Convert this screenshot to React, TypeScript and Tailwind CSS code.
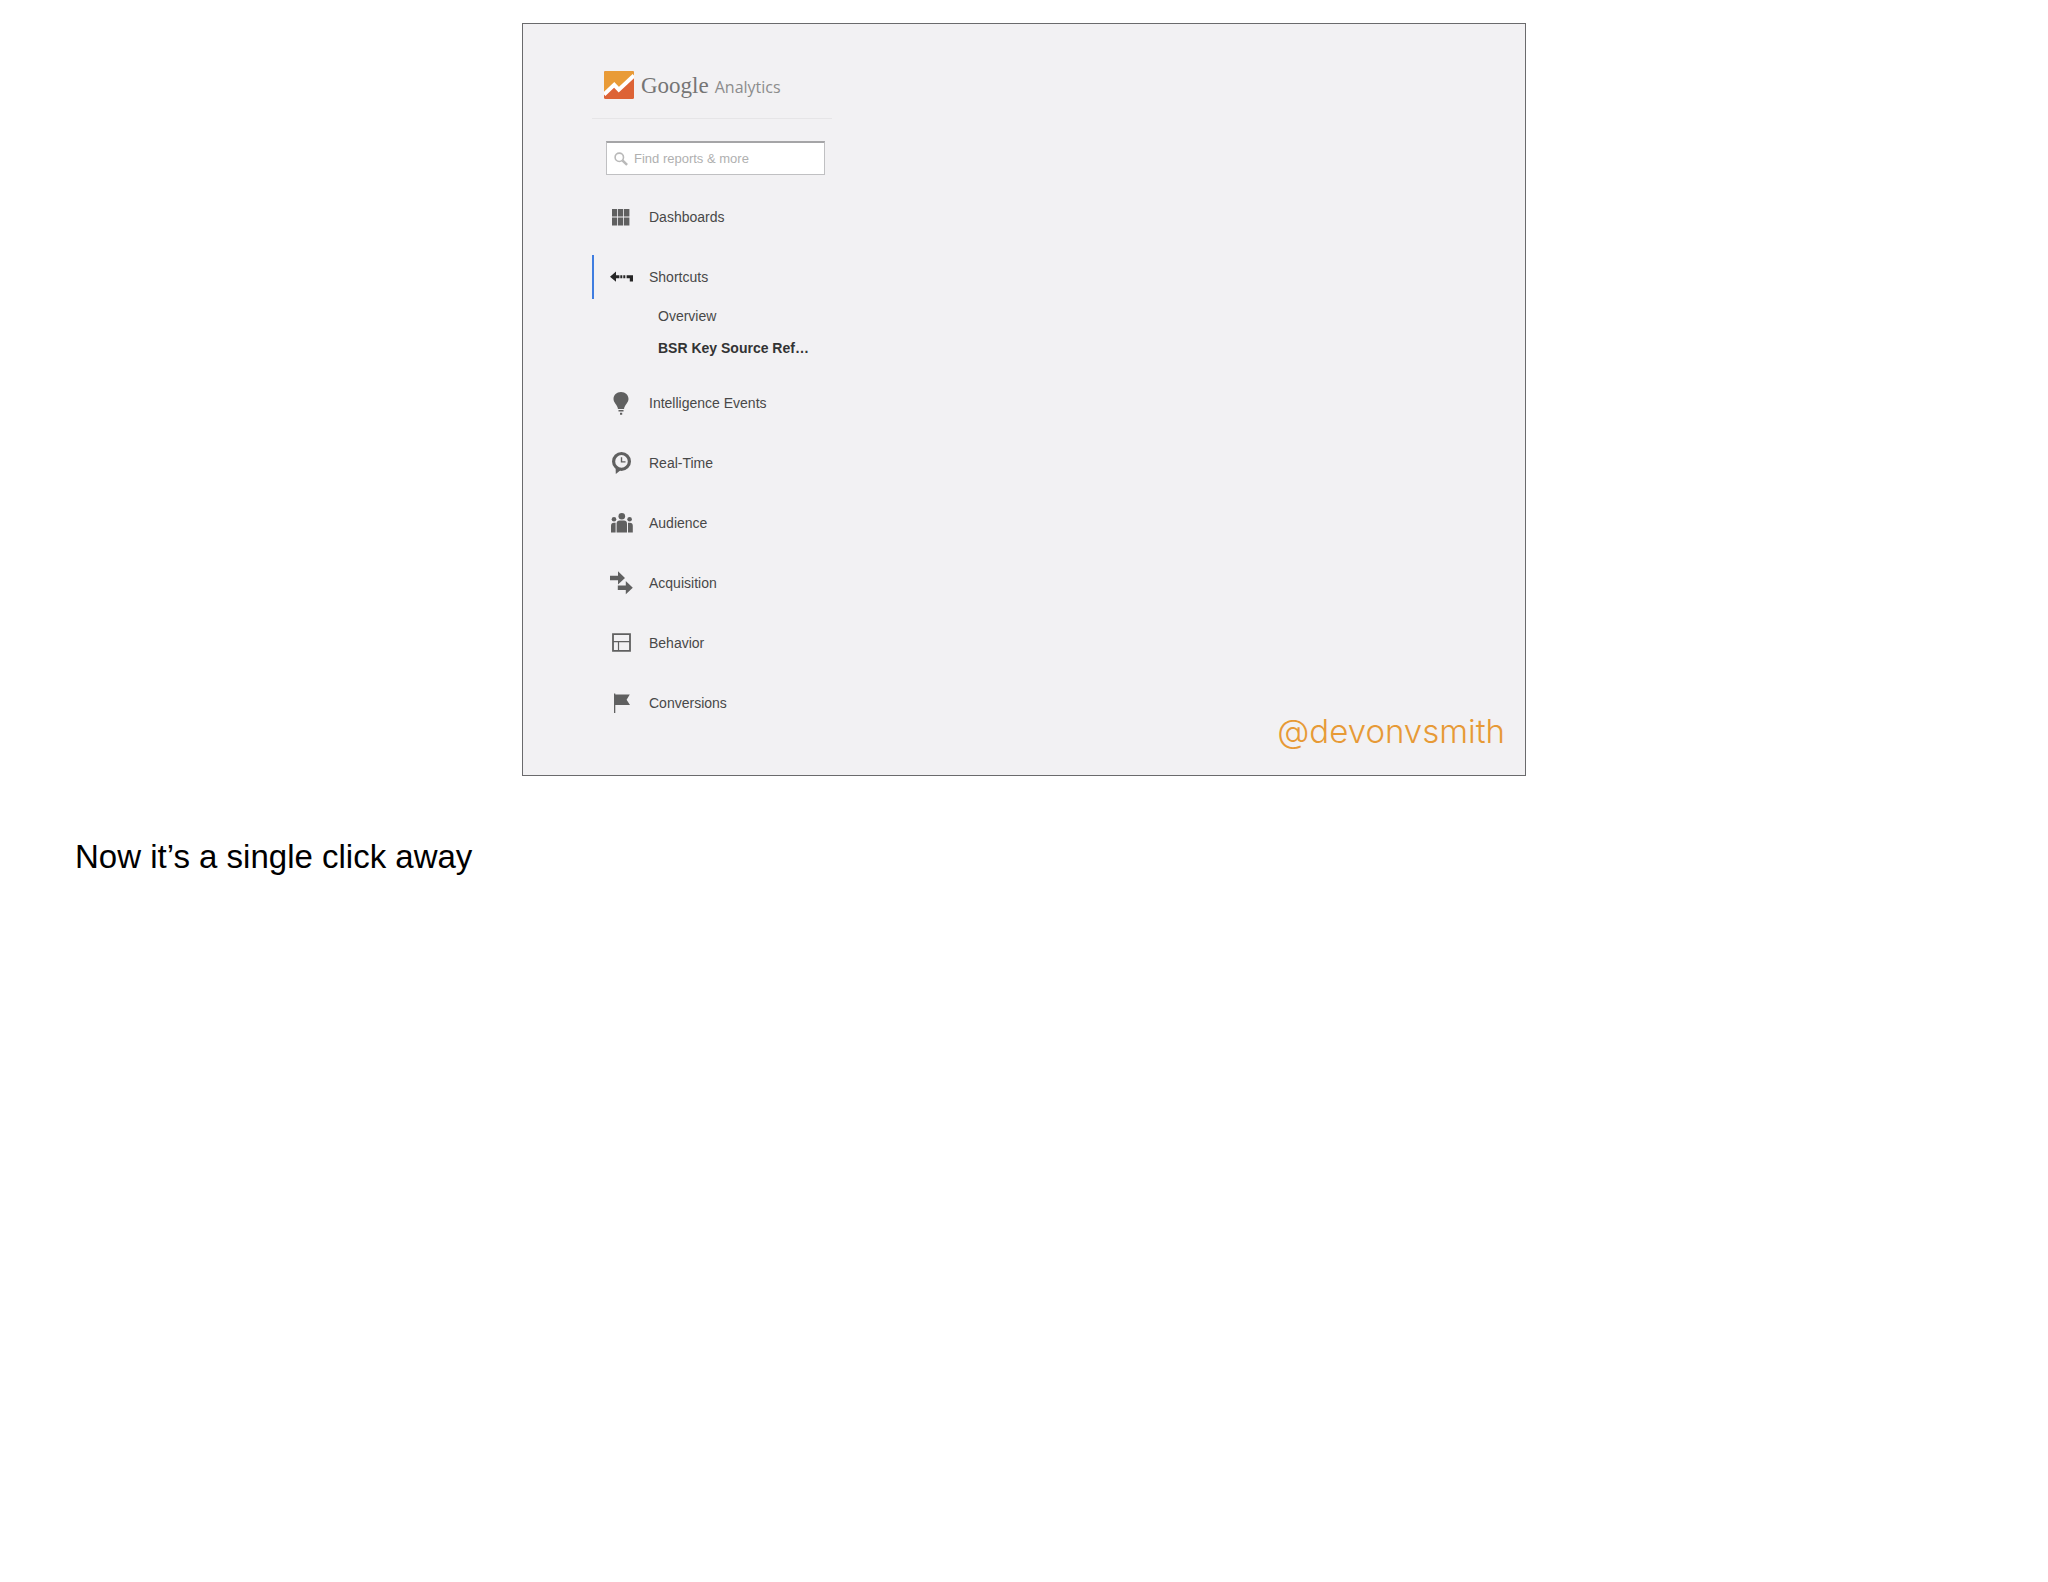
import type { ReactNode } from "react";

interface SubItem {
  label: string;
  current?: boolean;
}

interface NavItem {
  label: string;
  icon: ReactNode;
  active?: boolean;
  children?: SubItem[];
}

const navItems: NavItem[] = [
  {
    label: "Dashboards",
    icon: (
      <>
        <path d="M3 4h5.200v7.400H3zM9 4h5.200v7.400H9zM15 4h5.400v7.400H15z" />
        <path d="M3 12.400h5.200v8H3zM9 12.400h5.200v8H9zM15 12.400h5.400v8H15z" />
      </>
    ),
  },
  {
    label: "Shortcuts",
    active: true,
    icon: (
      <path
        className="text-[#262626]"
        fill="currentColor"
        d="M1 11.700 7 6.600v3.600h3.400v3H7v3.600zM11.300 10.200h2v3h-2zM14.300 10.200h2v3h-2zM17.600 10.200H24v6.400h-3.200v-3.400h-3.200z"
      />
    ),
    children: [{ label: "Overview" }, { label: "BSR Key Source Ref…", current: true }],
  },
  {
    label: "Intelligence Events",
    icon: (
      <>
        <path d="M12 1c4.400 0 7.500 3 7.500 7 0 3.800-3.600 5.400-4.500 9.900H9C8.100 13.400 4.500 11.800 4.500 8c0-4 3.100-7 7.500-7z" />
        <path d="M9.500 18.900h5v1.700h-5zM11 21.800h2.200v1.900H11z" />
      </>
    ),
  },
  {
    label: "Real-Time",
    icon: (
      <>
        <circle cx="12.500" cy="10.400" r="7.900" fill="none" stroke="currentColor" strokeWidth="3.200" />
        <path d="M6.600 15l4.900 4.200-4.700 3.800z" />
        <path d="M12.500 6.200v4.700h4" fill="none" stroke="currentColor" strokeWidth="1.400" />
      </>
    ),
  },
  {
    label: "Audience",
    icon: (
      <>
        <circle cx="12.800" cy="5.200" r="3.300" />
        <circle cx="5" cy="8.300" r="2.300" />
        <circle cx="20.600" cy="8.300" r="2.300" />
        <path d="M7.600 21.600v-9c0-2 1.300-3 3-3H15c1.700 0 3 1 3 3v9z" />
        <path d="M2 21.600v-6.800c0-2 1-3 3-3h1.600v9.800zM19 21.600v-9.800h1.800c2 0 3 1 3 3v6.800z" />
      </>
    ),
  },
  {
    label: "Acquisition",
    icon: (
      <>
        <path d="M1 4.800h8V.2l7 6.700-7 6.600V9.200H1z" />
        <path d="M8.800 14.600h8V10l7 6.700-7 6.600V19h-8z" />
      </>
    ),
  },
  {
    label: "Behavior",
    icon: (
      <>
        <path d="M4 3.200h17v16.600H4z" fill="none" stroke="currentColor" strokeWidth="1.800" />
        <path d="M4 10.600h17M9.500 10.600v9.200" fill="none" stroke="currentColor" strokeWidth="1.200" />
      </>
    ),
  },
  {
    label: "Conversions",
    icon: <path d="M5 2.600h1.300v.8h14.500l-3.200 5.400 3.400 5.200H6.300v8H5z" />,
  },
];

function AnalyticsLogo() {
  return (
    <svg viewBox="0 0 30 28" className="h-7 w-[30px]" aria-hidden="true">
      <rect width="30" height="28" rx="1.500" fill="#dd6336" />
      <path d="M1.500 0h27Q30 0 30 1.500V5L14.500 20.500 10.500 15.500 0 24V1.500Q0 0 1.500 0z" fill="#e99b37" />
      <path d="M0 23.500 10.200 13.800l4.600 4.900L30 4.500" fill="none" stroke="#fff" strokeWidth="4" />
    </svg>
  );
}

function NavRow({ item }: { item: NavItem }) {
  return (
    <li>
      <a
        href="#"
        className={`flex h-11 items-center gap-4 border-l-2 pl-[15px] ${
          item.active ? "border-[#3f7de0]" : "border-transparent"
        }`}
      >
        <svg viewBox="0 0 24 24" className="size-6 text-[#606060]" fill="currentColor" aria-hidden="true">
          {item.icon}
        </svg>
        {item.label}
      </a>

      {item.children && (
        <ul className="py-px pl-[66px]">
          {item.children.map((child) => (
            <li key={child.label}>
              <a
                href="#"
                className={`block text-sm leading-8 whitespace-nowrap ${
                  child.current ? "font-bold text-[#333]" : ""
                }`}
              >
                {child.label}
              </a>
            </li>
          ))}
        </ul>
      )}
    </li>
  );
}

function Sidebar() {
  return (
    <aside className="ml-[69px] w-60 shrink-0">
      <div className="flex items-center gap-[7px] border-b border-[#e6e5e7] pt-[46px] pb-[18px] pl-3">
        <AnalyticsLogo />
        <div className="flex items-baseline gap-1.5 pt-0.5 leading-7">
          <span className="font-['Liberation_Serif',serif] text-[23px] text-[#757575]">Google</span>
          <span className="font-['Open_Sans',sans-serif] text-base text-[#8c8c8c]">Analytics</span>
        </div>
      </div>

      <label className="mt-[22px] mr-[7px] ml-3.5 flex h-[34px] items-center gap-1.5 border border-t-2 border-[#c0c0c2] border-t-[#a5a5a7] bg-white pl-[7px]">
        <svg
          viewBox="0 0 14 14"
          className="size-3.5 shrink-0 text-[#b9b9b9]"
          fill="none"
          stroke="currentColor"
          aria-hidden="true"
        >
          <circle cx="5.300" cy="5.300" r="4.200" strokeWidth="1.600" />
          <path d="M8.500 8.500l4.600 4.300" strokeWidth="2.400" />
        </svg>
        <input
          type="search"
          aria-label="Find reports and more"
          placeholder="Find reports & more"
          className="w-full min-w-0 text-[13px] outline-none placeholder:text-[#b0b0b0]"
        />
      </label>

      <nav className="mt-5">
        <ul className="flex flex-col gap-4 text-sm text-[#484848]">
          {navItems.map((item) => (
            <NavRow key={item.label} item={item} />
          ))}
        </ul>
      </nav>
    </aside>
  );
}

export default function App() {
  return (
    <main className="min-h-screen bg-white py-[23px] font-['Liberation_Sans',Arial,sans-serif]">
      <section className="mx-auto flex aspect-[4/3] w-full max-w-[1004px] border border-[#6a6a6c] bg-[#f2f1f3]">
        <Sidebar />
        <div className="flex grow items-end justify-end pr-5 pb-6">
          <p className="font-['Inter',sans-serif] text-[33px] leading-10 font-light text-[#e79a36]">@devonvsmith</p>
        </div>
      </section>

      <p className="mt-[60px] px-[75px] text-[33px] leading-[42px] text-black">Now it’s a single click away</p>
    </main>
  );
}
